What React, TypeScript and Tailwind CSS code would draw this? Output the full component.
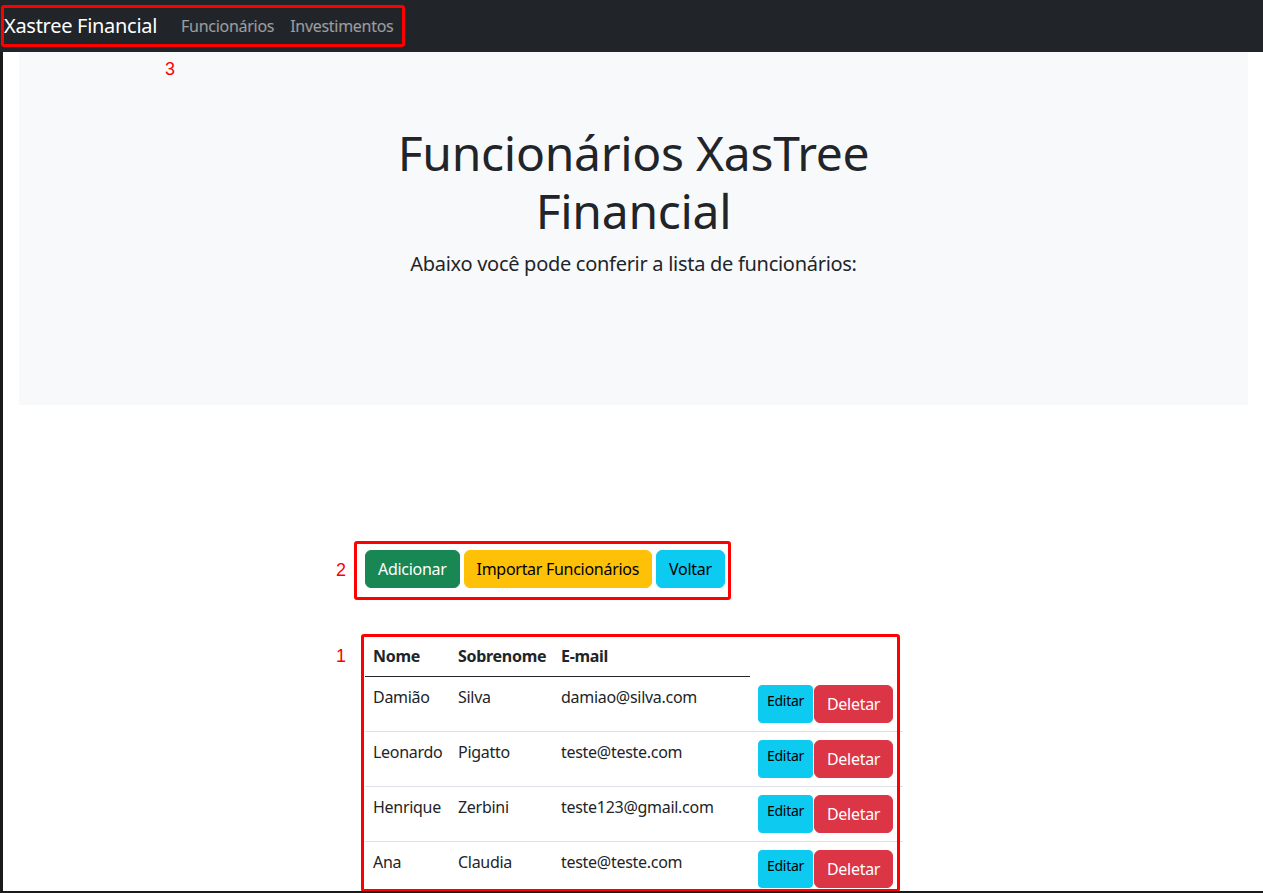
import React from "react";

const employees = [
  { nome: "Damião", sobrenome: "Silva", email: "damiao@silva.com" },
  { nome: "Leonardo", sobrenome: "Pigatto", email: "teste@teste.com" },
  { nome: "Henrique", sobrenome: "Zerbini", email: "teste123@gmail.com" },
  { nome: "Ana", sobrenome: "Claudia", email: "teste@teste.com" },
];

export default function App() {
  return (
    <div className="relative h-[893px] overflow-hidden bg-white text-[#212529] font-['Noto_Sans',sans-serif] tracking-[-0.018em] border-b-2 border-[#1b1b1b]">
      {/* navbar */}
      <nav className="h-[52px] bg-[#212529] flex items-center pl-[4px]">
        <span className="text-[20px] leading-[30px] text-white mr-4">Xastree Financial</span>
        <a className="px-2 text-base text-white/55">Funcionários</a>
        <a className="px-2 text-base text-white/55">Investimentos</a>
      </nav>

      <div className="flex h-full">
        <div className="w-[3px] bg-[#1b1b1b] shrink-0" />
        <main className="flex-1">
          {/* jumbotron */}
          <div className="ml-4 mr-[15px] h-[353px] bg-[#f8f9fa] pt-[72px]">
            <h1 className="w-[520px] mx-auto text-center text-[48px] leading-[1.2] font-normal">
              Funcionários XasTree Financial
            </h1>
            <p className="mt-[10px] text-center text-[20px] leading-[30px]">
              Abaixo você pode conferir a lista de funcionários:
            </p>
          </div>

          <div className="w-[538px] mx-auto mt-[145px]">
            <div className="flex gap-1 pl-px">
              <button className="px-3 py-1.5 text-base leading-6 rounded-md border border-[#198754] bg-[#198754] text-white">
                Adicionar
              </button>
              <button className="px-3 py-1.5 text-base leading-6 rounded-md border border-[#ffc107] bg-[#ffc107] text-black">
                Importar Funcionários
              </button>
              <button className="px-3 py-1.5 text-base leading-6 rounded-md border border-[#0dcaf0] bg-[#0dcaf0] text-black">
                Voltar
              </button>
            </div>

            <table className="mt-12 ml-px w-[538px] table-fixed border-collapse text-base leading-6">
              <colgroup>
                <col className="w-[85px]" />
                <col className="w-[103px]" />
                <col className="w-[197px]" />
                <col className="w-[153px]" />
              </colgroup>
              <thead>
                <tr>
                  <th className="px-2 py-2 text-left font-bold border-b border-[#212529]">Nome</th>
                  <th className="px-2 py-2 text-left font-bold border-b border-[#212529]">Sobrenome</th>
                  <th className="px-2 py-2 text-left font-bold border-b border-[#212529]">E-mail</th>
                </tr>
              </thead>
              <tbody>
                {employees.map((e, i) => (
                  <tr key={i}>
                    <td className="px-2 py-2 align-top border-b border-[#dee2e6]">{e.nome}</td>
                    <td className="px-2 py-2 align-top border-b border-[#dee2e6]">{e.sobrenome}</td>
                    <td className="px-2 py-2 align-top border-b border-[#dee2e6]">{e.email}</td>
                    <td className="px-2 py-2 align-top border-b border-[#dee2e6]">
                      <div className="flex gap-px">
                        <button className="px-2 py-1 text-sm leading-[21px] rounded border border-[#0dcaf0] bg-[#0dcaf0] text-black self-stretch flex items-start">
                          Editar
                        </button>
                        <button className="px-3 py-1.5 text-base leading-6 rounded-md border border-[#dc3545] bg-[#dc3545] text-white">
                          Deletar
                        </button>
                      </div>
                    </td>
                  </tr>
                ))}
              </tbody>
            </table>
          </div>
        </main>
      </div>

      {/* annotation overlays */}
      <div className="absolute left-[1px] top-[5px] w-[404px] h-[42px] border-[3px] border-[#ff0000] rounded-[3px]" />
      <span className="absolute left-[165px] top-[58px] text-[18px] leading-[22px] text-[#ff0000] font-['Liberation_Sans',sans-serif]">3</span>
      <div className="absolute left-[354px] top-[541px] w-[377px] h-[59px] border-[3px] border-[#ff0000] rounded-[3px]" />
      <span className="absolute left-[336px] top-[559px] text-[18px] leading-[22px] text-[#ff0000] font-['Liberation_Sans',sans-serif]">2</span>
      <div className="absolute left-[361px] top-[634px] w-[539px] h-[258px] border-[3px] border-[#ff0000] rounded-[3px]" />
      <span className="absolute left-[336px] top-[645px] text-[18px] leading-[22px] text-[#ff0000] font-['Liberation_Sans',sans-serif]">1</span>
    </div>
  );
}
